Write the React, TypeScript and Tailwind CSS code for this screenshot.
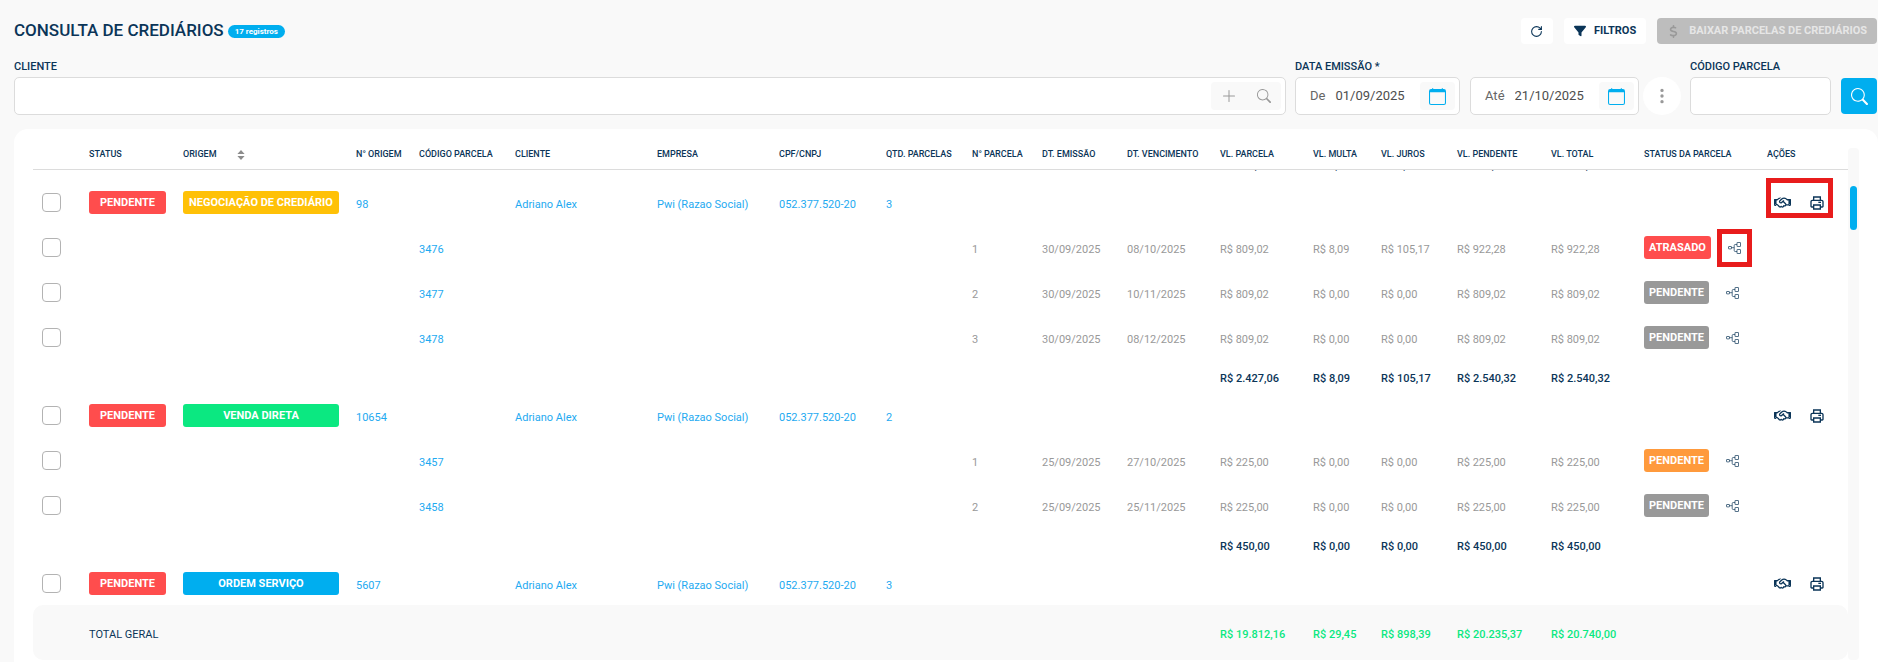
import { useLayoutEffect, useRef } from "react";
import { BiPrinter } from "react-icons/bi";
import { BsCalendar, BsPlusLg, BsSearch, BsThreeDotsVertical } from "react-icons/bs";
import { FaDollarSign, FaFilter, FaRegHandshake } from "react-icons/fa6";
import { RotateCw } from "lucide-react";

type Parcela = {
  codigo: string;
  numero: number;
  emissao: string;
  vencimento: string;
  valores: string[];
  status: string;
  cor: string;
  destaque?: boolean;
};

type Crediario = {
  origem: string;
  cor: string;
  numero: string;
  qtd: number;
  parcelas: Parcela[];
  totais?: string[];
  destaque?: boolean;
};

const COLUNAS = [
  { titulo: "", largura: "w-[48px]" },
  { titulo: "STATUS", largura: "w-[94px]" },
  { titulo: "ORIGEM", largura: "w-[173px]", ordena: true },
  { titulo: "N° ORIGEM", largura: "w-[63px]" },
  { titulo: "CÓDIGO PARCELA", largura: "w-[96px]" },
  { titulo: "CLIENTE", largura: "w-[142px]" },
  { titulo: "EMPRESA", largura: "w-[122px]" },
  { titulo: "CPF/CNPJ", largura: "w-[107px]" },
  { titulo: "QTD. PARCELAS", largura: "w-[86px]" },
  { titulo: "N° PARCELA", largura: "w-[70px]" },
  { titulo: "DT. EMISSÃO", largura: "w-[85px]" },
  { titulo: "DT. VENCIMENTO", largura: "w-[93px]" },
  { titulo: "VL. PARCELA", largura: "w-[93px]" },
  { titulo: "VL. MULTA", largura: "w-[68px]" },
  { titulo: "VL. JUROS", largura: "w-[76px]" },
  { titulo: "VL. PENDENTE", largura: "w-[94px]" },
  { titulo: "VL. TOTAL", largura: "w-[93px]" },
  { titulo: "STATUS DA PARCELA", largura: "w-[123px]" },
  { titulo: "AÇÕES", largura: "w-[89px]" },
];

const CREDIARIOS: Crediario[] = [
  {
    origem: "NEGOCIAÇÃO DE CREDIÁRIO",
    cor: "bg-[#ffc107]",
    numero: "98",
    qtd: 3,
    destaque: true,
    parcelas: [
      {
        codigo: "3476",
        numero: 1,
        emissao: "30/09/2025",
        vencimento: "08/10/2025",
        valores: ["R$ 809,02", "R$ 8,09", "R$ 105,17", "R$ 922,28", "R$ 922,28"],
        status: "ATRASADO",
        cor: "bg-[#ff4d4d]",
        destaque: true,
      },
      {
        codigo: "3477",
        numero: 2,
        emissao: "30/09/2025",
        vencimento: "10/11/2025",
        valores: ["R$ 809,02", "R$ 0,00", "R$ 0,00", "R$ 809,02", "R$ 809,02"],
        status: "PENDENTE",
        cor: "bg-[#999999]",
      },
      {
        codigo: "3478",
        numero: 3,
        emissao: "30/09/2025",
        vencimento: "08/12/2025",
        valores: ["R$ 809,02", "R$ 0,00", "R$ 0,00", "R$ 809,02", "R$ 809,02"],
        status: "PENDENTE",
        cor: "bg-[#999999]",
      },
    ],
    totais: ["R$ 2.427,06", "R$ 8,09", "R$ 105,17", "R$ 2.540,32", "R$ 2.540,32"],
  },
  {
    origem: "VENDA DIRETA",
    cor: "bg-[#0be881]",
    numero: "10654",
    qtd: 2,
    parcelas: [
      {
        codigo: "3457",
        numero: 1,
        emissao: "25/09/2025",
        vencimento: "27/10/2025",
        valores: ["R$ 225,00", "R$ 0,00", "R$ 0,00", "R$ 225,00", "R$ 225,00"],
        status: "PENDENTE",
        cor: "bg-[#ff9a3c]",
      },
      {
        codigo: "3458",
        numero: 2,
        emissao: "25/09/2025",
        vencimento: "25/11/2025",
        valores: ["R$ 225,00", "R$ 0,00", "R$ 0,00", "R$ 225,00", "R$ 225,00"],
        status: "PENDENTE",
        cor: "bg-[#999999]",
      },
    ],
    totais: ["R$ 450,00", "R$ 0,00", "R$ 0,00", "R$ 450,00", "R$ 450,00"],
  },
  {
    origem: "ORDEM SERVIÇO",
    cor: "bg-[#00aeef]",
    numero: "5607",
    qtd: 3,
    parcelas: [],
  },
];

const TOTAL_GERAL = ["R$ 19.812,16", "R$ 29,45", "R$ 898,39", "R$ 20.235,37", "R$ 20.740,00"];

export default function App() {
  return (
    <main
      className="h-screen flex flex-col pl-[14px] pt-[18px] bg-[#f9f9f9] text-[#0b3558]
      font-[Roboto,sans-serif] overflow-hidden"
    >
      <PageHeader />
      <Filters />
      <Grid />
    </main>
  );
}

function PageHeader() {
  return (
    <header className="flex items-center justify-between pr-px h-[26px]">
      <div className="flex items-center gap-1">
        <h1 className="text-[17px] font-medium">CONSULTA DE CREDIÁRIOS</h1>
        <span className="h-[13px] px-[7px] rounded-full bg-[#00aeef] text-white text-[8px] leading-[14px] font-bold">
          17 registros
        </span>
      </div>
      <div className="flex h-full text-[11px] font-bold">
        <button
          aria-label="Atualizar"
          className="w-8 flex items-center justify-center rounded bg-white"
        >
          <RotateCw className="size-[13px]" strokeWidth={2} />
        </button>
        <button className="ml-[11px] flex items-center gap-2 px-[10px] rounded bg-white">
          <FaFilter className="size-[12px]" />
          FILTROS
        </button>
        <button
          disabled
          className="ml-[11px] flex items-center gap-[9px] px-[10px] rounded bg-[#bdbdbd] text-[#e6e6e6]"
        >
          <FaDollarSign className="size-[13px] text-[#999999]" />
          BAIXAR PARCELAS DE CREDIÁRIOS
        </button>
      </div>
    </header>
  );
}

function Filters() {
  return (
    <form className="flex items-end pr-px mt-4 text-[11px] font-medium">
      <div className="flex-1 flex flex-col gap-1">
        <label htmlFor="cliente" className="leading-[13px]">
          CLIENTE
        </label>
        <div className="h-[38px] flex items-center pr-1 rounded-[5px] border border-[#dcdcdc] bg-white">
          <input id="cliente" className="flex-1 h-full px-3 text-[13px] outline-none" />
          <div className="h-7 w-[70px] flex items-center justify-around rounded bg-[#f9f9f9] text-[#999999]">
            <button type="button" aria-label="Adicionar cliente">
              <BsPlusLg className="size-4" />
            </button>
            <button type="button" aria-label="Buscar cliente">
              <BsSearch className="size-[14px]" />
            </button>
          </div>
        </div>
      </div>

      <fieldset className="ml-[9px]">
        <legend className="leading-[13px] mb-1">DATA EMISSÃO *</legend>
        <div className="flex">
          <DateField id="de" rotulo="De" valor="01/09/2025" largura="w-[165px]" />
          <DateField id="ate" rotulo="Até" valor="21/10/2025" largura="w-[169px] ml-[10px]" />
          <button
            type="button"
            aria-label="Mais períodos"
            className="ml-1 size-[38px] flex items-center justify-center rounded-full bg-white text-[#999999]"
          >
            <BsThreeDotsVertical className="size-[18px]" />
          </button>
        </div>
      </fieldset>

      <div className="ml-[9px] flex flex-col gap-1">
        <label htmlFor="codigo" className="leading-[13px]">
          CÓDIGO PARCELA
        </label>
        <input
          id="codigo"
          className="w-[141px] h-[38px] px-3 rounded-[5px] border border-[#dcdcdc] bg-white text-[13px] outline-none"
        />
      </div>
      <button
        aria-label="Pesquisar"
        className="ml-[10px] mb-px size-9 flex items-center justify-center rounded bg-[#00aeef] text-white"
      >
        <BsSearch className="size-[17px]" />
      </button>
    </form>
  );
}

function DateField({
  id,
  rotulo,
  valor,
  largura,
}: {
  id: string;
  rotulo: string;
  valor: string;
  largura: string;
}) {
  return (
    <div
      className={`${largura} h-[38px] flex items-center pl-[14px] pr-1 rounded-[5px] border border-[#dcdcdc] bg-white text-[13px] font-normal text-[#4d4d4d]`}
    >
      <label htmlFor={id} className="text-[#666666]">
        {rotulo}
      </label>
      <input id={id} defaultValue={valor} className="ml-[10px] flex-1 min-w-0 outline-none" />
      <button
        type="button"
        aria-label="Abrir calendário"
        className="h-7 w-[35px] flex items-center justify-center rounded bg-[#f9f9f9] text-[#00aeef]"
      >
        <BsCalendar className="size-[17px]" />
      </button>
    </div>
  );
}

function Grid() {
  const scroller = useRef<HTMLDivElement>(null);

  // the list opens slightly scrolled, past the previous group's totals
  useLayoutEffect(() => {
    if (scroller.current) scroller.current.scrollTop = 23;
  }, []);

  return (
    <section className="relative flex-1 min-h-0 mt-[14px] pl-[19px] pr-[30px] pb-[2px] rounded-t-[14px] bg-white">
      <div ref={scroller} className="h-full overflow-y-auto [scrollbar-width:none]">
        <table className="w-full table-fixed border-separate border-spacing-0 text-left text-[11px] whitespace-nowrap">
          <thead>
            <tr>
              {COLUNAS.map((c) => (
                <th
                  key={c.titulo}
                  className={`${c.largura} sticky top-0 z-20 h-[41px] pl-2 pt-3 pb-0 bg-white border-b border-[#dcdcdc] text-[9px] font-medium`}
                >
                  <span className="inline-flex items-center gap-5">
                    {c.titulo}
                    {c.ordena && <SortIcon />}
                  </span>
                </th>
              ))}
            </tr>
          </thead>
          <tbody>
            <TotalsRow valores={["R$ 150,00", "R$ 0,00", "R$ 0,00", "R$ 150,00", "R$ 150,00"]} />
            {CREDIARIOS.map((c) => (
              <Group key={c.numero} crediario={c} />
            ))}
          </tbody>
          <tfoot className="font-medium">
            <tr>
              <td className="sticky bottom-0 z-20 h-[55px] bg-[#f9f9f9] rounded-l-[10px]" />
              <td colSpan={11} className="sticky bottom-0 z-20 pl-2 pt-[5px] bg-[#f9f9f9] font-normal">
                TOTAL GERAL
              </td>
              {TOTAL_GERAL.map((v) => (
                <td key={v} className="sticky bottom-0 z-20 pl-2 pt-[5px] bg-[#f9f9f9] text-[#0be881]">
                  {v}
                </td>
              ))}
              <td colSpan={2} className="sticky bottom-0 z-20 bg-[#f9f9f9] rounded-r-[10px]" />
            </tr>
          </tfoot>
        </table>
      </div>
      <div className="absolute right-[19px] top-[19px] bottom-[2px] w-[11px] pt-[38px] rounded bg-[#f9f9f9]">
        <div className="mx-auto w-[7px] h-11 rounded-full bg-[#00aeef]" />
      </div>
    </section>
  );
}

function Group({ crediario: c }: { crediario: Crediario }) {
  return (
    <>
      <tr className="h-[45px] text-[#1eaaf1]">
        <td className="pl-[9px]">
          <Check label={`Selecionar origem ${c.numero}`} />
        </td>
        <td className="pl-2 pr-[9px]">
          <Badge texto="PENDENTE" cor="bg-[#ff4d4d] w-full" />
        </td>
        <td className="pl-2 pr-[9px]">
          <Badge texto={c.origem} cor={`${c.cor} w-full`} />
        </td>
        <td className="pl-2 pt-[5px]">{c.numero}</td>
        <td />
        <td className="pl-2 pt-[5px]">Adriano Alex</td>
        <td className="pl-2 pt-[5px]">Pwi (Razao Social)</td>
        <td className="pl-2 pt-[5px]">052.377.520-20</td>
        <td className="pl-2 pt-[5px]">{c.qtd}</td>
        <td colSpan={9} />
        <td className="pl-[7px]">
          <div className="relative flex items-center w-[67px] h-[30px] pl-2 gap-[18px] text-[#0b3558]">
            <button aria-label="Negociar">
              <FaRegHandshake className="size-[17px]" />
            </button>
            <button aria-label="Imprimir">
              <BiPrinter className="size-4" />
            </button>
            {c.destaque && <Highlight lugar="inset-x-0 -top-[10px] bottom-0" />}
          </div>
        </td>
      </tr>
      {c.parcelas.map((p) => (
        <tr key={p.codigo} className="h-[45px] text-[#999999]">
          <td className="pl-[9px]">
            <Check label={`Selecionar parcela ${p.codigo}`} />
          </td>
          <td colSpan={3} />
          <td className="pl-2 pt-[5px] text-[#1eaaf1]">{p.codigo}</td>
          <td colSpan={4} />
          <td className="pl-2 pt-[5px]">{p.numero}</td>
          <td className="pl-2 pt-[5px]">{p.emissao}</td>
          <td className="pl-2 pt-[5px]">{p.vencimento}</td>
          {p.valores.map((v, i) => (
            <td key={i} className="pl-2 pt-[5px]">
              {v}
            </td>
          ))}
          <td className="pl-2">
            <div className="flex items-center">
              <Badge texto={p.status} cor={p.cor} />
              <button
                aria-label="Ver detalhes"
                className="relative ml-[6px] w-[35px] h-[38px] flex items-center justify-center text-[#0b3558]"
              >
                <BranchIcon />
                {p.destaque && <Highlight lugar="inset-0" />}
              </button>
            </div>
          </td>
          <td />
        </tr>
      ))}
      {c.totais && <TotalsRow valores={c.totais} />}
    </>
  );
}

function TotalsRow({ valores }: { valores: string[] }) {
  return (
    <tr className="h-[33px] font-medium">
      <td colSpan={12} />
      {valores.map((v, i) => (
        <td key={i} className="pl-2 pt-[5px]">
          {v}
        </td>
      ))}
      <td colSpan={2} />
    </tr>
  );
}

function Badge({ texto, cor }: { texto: string; cor: string }) {
  return (
    <span
      className={`${cor} inline-block align-middle h-[23px] px-[5px] rounded-[3px] text-center text-[11px] leading-6 font-bold text-white`}
    >
      {texto}
    </span>
  );
}

function Check({ label }: { label: string }) {
  return (
    <input
      type="checkbox"
      aria-label={label}
      className="block size-[19px] appearance-none rounded-[4px] border border-[#b3b3b3] bg-white checked:bg-[#00aeef]"
    />
  );
}

function Highlight({ lugar }: { lugar: string }) {
  return <span className={`${lugar} absolute border-5 border-[#e81c1c] pointer-events-none`} />;
}

function SortIcon() {
  return (
    <svg viewBox="0 0 8 10" className="w-2 h-[10px] fill-[#8c8c8c]">
      <path d="M4 0 7.6 4H.4zM4 10 .4 6h7.2z" />
    </svg>
  );
}

function BranchIcon() {
  return (
    <svg viewBox="0 0 13 12" className="w-[13px] h-3 fill-none stroke-current" strokeWidth="0.7">
      <rect x="0.5" y="4.5" width="3" height="2.4" rx="0.4" />
      <rect x="9" y="0.5" width="3.5" height="4" rx="0.3" />
      <rect x="9" y="7.5" width="3.5" height="4" rx="0.3" />
      <path d="M3.5 5.7H6.200M9 2.500H7.200a1 1 0 0 0-1 1V8.500a1 1 0 0 0 1 1H9" />
    </svg>
  );
}
